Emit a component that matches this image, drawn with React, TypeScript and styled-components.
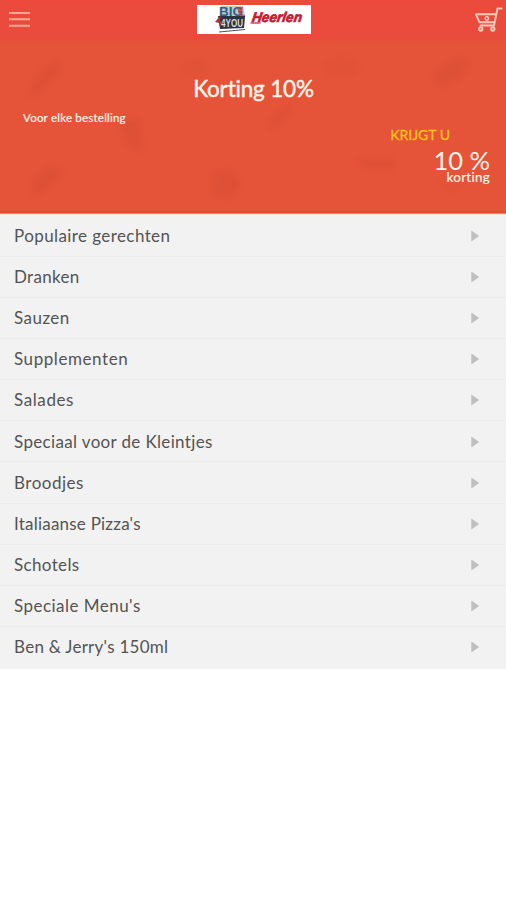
import React from "react";
import styled, { createGlobalStyle } from "styled-components";

const Global = createGlobalStyle`
  * { box-sizing: border-box; }
  html, body { margin: 0; background: #fff; }
  body { font-family: Lato, "Open Sans", sans-serif; }
`;

const Screen = styled.main`
  width: 506px;
  height: 900px;
  overflow: hidden;
  background: #fff;
`;

const Hero = styled.div`
  height: 215px;
  background: linear-gradient(#eb4a3c 0, #e94b3c 37px, #e55338 43px, #e55338 211px, #e54b2b 212px, #e54b2b 213px, #f4c9bc 214px, #fbf8f4 215px);
`;

const Header = styled.header`
  height: 40px;
  display: grid;
  grid-template-columns: 60px 1fr 60px;
  align-items: start;
`;

const IconButton = styled.button<{ $end?: boolean }>`
  border: 0;
  background: none;
  height: 38px;
  padding: ${(p) => (p.$end ? "5px 3px 0 0" : "10px 0 0 8px")};
  display: flex;
  align-items: flex-start;
  justify-content: ${(p) => (p.$end ? "flex-end" : "flex-start")};
`;

const Brand = styled.div`
  justify-self: center;
  margin: 5px 0 0 1px;
  width: 114px;
  height: 29px;
  background: #fff;
`;

const Promo = styled.section`
  position: relative;
  height: 173px;
  display: flex;
  flex-direction: column;
  color: #fff3ea;
`;

const Pattern = styled.svg`
  position: absolute;
  inset: 0;
`;

const Title = styled.h1`
  position: relative;
  margin: 34px 0 0 1px;
  text-align: center;
  font-size: 22.5px;
  line-height: 30px;
  font-weight: 400;
  letter-spacing: -0.18px;
  -webkit-text-stroke: 0.45px currentColor;
`;

const Condition = styled.p`
  position: relative;
  margin: 6px 0 0 23px;
  font-size: 11.5px;
  line-height: 16px;
  letter-spacing: 0.22px;
  -webkit-text-stroke: 0.2px currentColor;
`;

const Offer = styled.div`
  position: relative;
  display: flex;
  flex-direction: column;
  align-items: flex-end;
  padding-right: 16px;
`;

const OfferLead = styled.span`
  margin-right: 40px;
  color: #fcc417;
  font-size: 14px;
  line-height: 17px;
  -webkit-text-stroke: 0.3px currentColor;
`;

const OfferValue = styled.strong`
  margin-top: 6px;
  font-size: 25.5px;
  line-height: 22px;
  font-weight: 400;
`;

const OfferUnit = styled.span`
  margin-top: -1px;
  font-size: 13.5px;
  line-height: 15px;
  letter-spacing: 0.25px;
  -webkit-text-stroke: 0.2px currentColor;
`;

const Menu = styled.nav`
  background: #f2f2f2;
  padding-top: 0.6px;
  height: 454px;
`;

const MenuItem = styled.a`
  height: 41.15px;
  padding: 0.4px 26px 0 14px;
  display: flex;
  align-items: center;
  justify-content: space-between;
  color: #545454;
  border-bottom: 1px solid #ebebeb;
  &:last-child { border-bottom-color: #f2f2f2; }
`;

const Label = styled.span<{ $spacing: number }>`
  font-size: 17px;
  line-height: 24px;
  white-space: nowrap;
  letter-spacing: ${(p) => p.$spacing}px;
`;

const categories: [string, number][] = [
  ["Populaire gerechten", 0.41],
  ["Dranken", 0.3],
  ["Sauzen", 0.45],
  ["Supplementen", 0.57],
  ["Salades", 0.6],
  ["Speciaal voor de Kleintjes", 0.35],
  ["Broodjes", 0.5],
  ["Italiaanse Pizza's", 0.22],
  ["Schotels", 0.35],
  ["Speciale Menu's", 0.47],
  ["Ben & Jerry's 150ml", 0.27],
];

const Arrow = () => (
  <svg width="9" height="12" viewBox="0 0 9 12">
    <path d="M.3 .5 8.2 6 .3 11.5Z" fill="#bfbfbf" />
  </svg>
);

const Logo = () => (
  <svg width="114" height="29" viewBox="0 0 114 29">
    <path d="M24 1h22l2 8-1 13-23 2-2-8z" fill="#6b7781" opacity=".4" />
    <text x="22" y="11" fontFamily="Liberation Sans" fontWeight="900" fontSize="12.5" textLength="24" lengthAdjust="spacingAndGlyphs" fill="#2b6286">BIG</text>
    <path d="M40 2l6 0-1 7 4 2-6 3z" fill="#b93845" opacity=".75" />
    <path d="M21 11h27l-1 12-24 1z" fill="#2c3342" />
    <text x="24" y="21.5" fontFamily="Liberation Sans" fontWeight="900" fontSize="11.5" textLength="22" lengthAdjust="spacingAndGlyphs" fill="#d5dce1">4YOU</text>
    <path d="M18 17l6-7-1 6 2 1-2 5-1-4z" fill="#a7343c" />
    <path d="M22 27l26-2.5" stroke="#4d535c" strokeWidth="1.1" />
    <text transform="skewX(-8)" x="57" y="17.5" fontFamily="Liberation Sans" fontWeight="900" fontStyle="italic" fontSize="14" textLength="50" lengthAdjust="spacingAndGlyphs" fill="#c91832" stroke="#c91832" strokeWidth=".7">Heerlen</text>
    <path d="M53.5 18h10" stroke="#c91832" strokeWidth="1.2" />
  </svg>
);

const FoodPattern = () => (
  <Pattern width="506" height="173" viewBox="0 40 506 173" fill="#9f3e2c">
    <defs>
      <filter id="soft" x="-40%" y="-40%" width="180%" height="180%"><feGaussianBlur stdDeviation="3" /></filter>
    </defs>
    <g filter="url(#soft)" opacity=".1">
      <path d="M31 88l11-18 15-10 4 12-12 10-11 11-9 3z" />
      <path d="M118 120l21-1 2 35-14-12z" />
      <path d="M31 187l16-20 16 4-11 13-16 12z" />
      <path d="M213 174l16-4 12 13-9 15-18-3z" />
      <path d="M179 66l20-9 10 11-18 13z" opacity=".4" />
      <path d="M268 123l20-19 3 7-18 18z" />
      <path d="M322 63l20-8 19 8-6 13-27 1z" opacity=".3" />
      <path d="M361 157q15 7 31 0v11q-20 2-33-4z" />
      <path d="M433 76l20-17 17 1-8 15-22 13z" />
      <path d="M439 181l14-10 14 9-13 14z" opacity=".4" />
    </g>
  </Pattern>
);

export default function App() {
  return (
    <>
      <Global />
      <Screen>
        <Hero>
          <Header>
            <IconButton aria-label="Menu">
              <svg width="23" height="19" viewBox="0 0 23 19">
                <path d="M1 3H22M1 9.3H22M1 15.7H22" stroke="#f7a995" strokeWidth="2" />
              </svg>
            </IconButton>
            <Brand><Logo /></Brand>
            <IconButton $end aria-label="Winkelwagen">
              <svg width="29" height="28" viewBox="0 0 29 28" fill="none" stroke="#ffc9ba" strokeWidth="1.9" strokeLinecap="round" strokeLinejoin="round">
                <path d="M27.5 3.5h-4L20 20.5H6.5M22 9.3H2l3.5 8h15" />
                <circle cx="6.8" cy="24" r="1.7" />
                <circle cx="18.8" cy="24" r="1.7" />
                <circle cx="12.8" cy="13.5" r="1.7" strokeWidth="1.5" />
              </svg>
            </IconButton>
          </Header>
          <Promo>
            <FoodPattern />
            <Title>Korting 10%</Title>
            <Condition>Voor elke bestelling</Condition>
            <Offer>
              <OfferLead>KRIJGT U</OfferLead>
              <OfferValue>10 %</OfferValue>
              <OfferUnit>korting</OfferUnit>
            </Offer>
          </Promo>
        </Hero>
        <Menu>
          {categories.map(([name, spacing]) => (
            <MenuItem key={name}>
              <Label $spacing={spacing}>{name}</Label>
              <Arrow />
            </MenuItem>
          ))}
        </Menu>
      </Screen>
    </>
  );
}
